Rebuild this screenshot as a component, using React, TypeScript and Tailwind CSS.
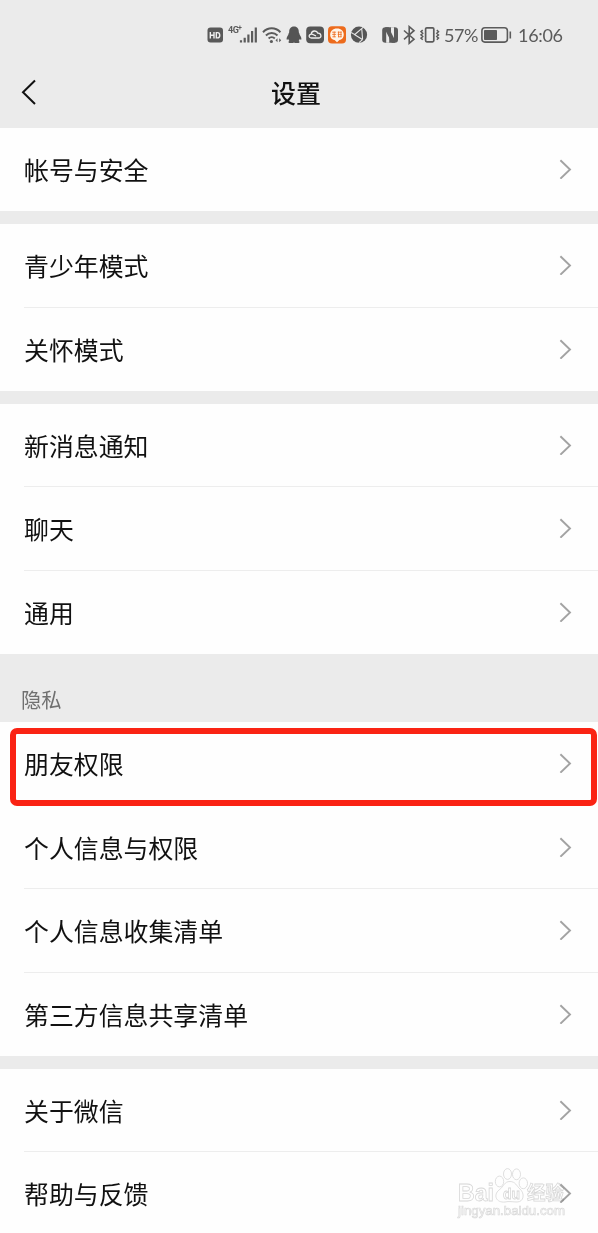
import type { ReactNode } from "react";
import clsx from "clsx";

type SettingGroup = {
  title?: string;
  className: string;
  items: string[];
};

const GROUPS: SettingGroup[] = [
  { className: "h-[83px]", items: ["帐号与安全"] },
  { className: "mt-[13px] h-[167px]", items: ["青少年模式", "关怀模式"] },
  { className: "mt-[13px] h-[250px]", items: ["新消息通知", "聊天", "通用"] },
  {
    title: "隐私",
    className: "h-[334px]",
    items: ["朋友权限", "个人信息与权限", "个人信息收集清单", "第三方信息共享清单"],
  },
  { className: "mt-[13px] h-[166px]", items: ["关于微信", "帮助与反馈"] },
];

const HIGHLIGHTED = "朋友权限";

function Glyph({ width, className, children }: { width: number; className?: string; children: ReactNode }) {
  return (
    <svg
      width={width}
      height={20}
      viewBox={`0 0 ${width} 20`}
      fill="none"
      stroke="none"
      aria-hidden="true"
      className={clsx("shrink-0", className)}
    >
      {children}
    </svg>
  );
}

function StatusBar() {
  return (
    <div className="flex h-[70px] items-center pl-[207px] text-[#5b5b5b]">
      <Glyph width={16}>
        <rect x="0.5" y="2.5" width="15.5" height="15" rx="3" fill="#595959" />
        <path d="M3.3 7v6.5M7 7v6.5M3.3 10.2H7M9.3 7.6v5.3h1.2c3 0 3-5.3 0-5.3z" stroke="#eee" strokeWidth="1.4" />
      </Glyph>
      {/* 4G+ と電波強度 */}
      <div className="relative ml-[5px] h-5 w-[30px] shrink-0">
        <span className="absolute top-[1px] left-0 font-['Roboto',sans-serif] text-[9px] leading-[9px] font-bold tracking-[-0.5px]">
          4G
        </span>
        <span className="absolute -top-[1px] left-[10px] font-['Roboto',sans-serif] text-[7px] leading-[9px] font-bold">
          +
        </span>
        <svg width="30" height="20" viewBox="0 0 30 20" className="absolute inset-0" aria-hidden="true">
          <path
            d="M13 15.2v2.3M16.7 12.7v4.8M20.4 9.5v8M24.1 6v11.5M27.8 2.5v15"
            stroke="#5b5b5b"
            strokeWidth="2.2"
          />
        </svg>
      </div>
      <Glyph width={20} className="ml-[4px]">
        <path d="M1 7.2c5-5.2 12.4-5.2 17.4 0" stroke="#5b5b5b" strokeWidth="2" />
        <path d="M3.9 10.5c3.4-3.4 8.2-3.4 11.6 0M6.6 13.5c1.8-1.8 4.4-1.8 6.2 0" stroke="#5b5b5b" strokeWidth="1.9" />
        <circle cx="9.4" cy="16.5" r="1.6" fill="#5b5b5b" />
        <path d="m15.5 13.3-2 2 2 2zM17.2 13.3l2 2-2 2z" fill="#5b5b5b" />
      </Glyph>
      <Glyph width={16} className="ml-[4px]">
        <path
          d="M8 1.5c-3.4 0-5 2.5-4.8 5.5 0 1.1-.9 1.6-.9 2.7C1.2 11.2.3 13 .7 14.4c.3.8 1 .2 1.5-.6.2 1 .6 1.6 1.2 2.2-.8.3-1.1.8-.8 1.4.5.9 4.6.8 5.4.1.8.7 4.9.8 5.4-.1.3-.6 0-1.1-.8-1.4.6-.6 1-1.2 1.2-2.2.5.8 1.2 1.4 1.5.6.4-1.4-.5-3.2-1.6-4.7 0-1.1-.9-1.6-.9-2.7C13 4 11.4 1.5 8 1.5z"
          fill="#555"
        />
      </Glyph>
      <Glyph width={18} className="ml-[4px]">
        <rect x="0.2" y="1.5" width="17.8" height="16.8" rx="4" fill="#555" />
        <path
          d="M13 13H5.4c-3 0-3-4 .2-3.9 1.8 0 2.9 1.7 4.5 1.7M5.2 9c.6-3.7 5.6-4 6.6-.8 3.9-.2 4 4.8 1.2 4.8"
          stroke="#eee"
          strokeWidth="1.3"
        />
      </Glyph>
      <Glyph width={18} className="ml-[4px]">
        <rect x="0" y="1.2" width="18" height="17.4" rx="4" fill="#ed6b1c" />
        <path d="M9 3.6c-8.6 0-8.6 10.9-2.4 11.4L9 17.2l2.4-2.2c6.2-.5 6.2-11.4-2.4-11.4z" fill="#fff5e9" />
        <path
          d="M4.2 7.2h3.9M4.2 9.4h3.9M4.4 11.8h3.5M6.2 6.5v5.7M9.7 7.2h4M9.7 9.4h4M10 11.8h3.5M10.5 6.5v5.7M13 6.5v5.7"
          stroke="#ed6b1c"
          strokeWidth="0.8"
        />
      </Glyph>
      <Glyph width={18} className="ml-[4px]">
        <circle cx="9" cy="9.7" r="8.1" fill="#555" />
        <path
          d="M13.4 2.2 4.8 9.5M4 9.2l8.8 5.6M12.6 14.6 11.8 4.2M4.4 9.4 1.2 7.5M12.5 14.7 9 17.7"
          stroke="#e6e6e6"
          strokeWidth="1.1"
        />
      </Glyph>
      <Glyph width={17} className="ml-[14px]">
        <rect x="0.2" y="2.3" width="15.8" height="15.4" rx="3.2" fill="#5b5b5b" />
        <path d="M4.2 17.7V5l3 2.6v10.1zM9 2.3v10.2l3 2.6V2.3z" fill="#ebebeb" />
        <path d="M3.4 2.3h3.2l6.2 12.5v2.9h-3L3.4 5.4z" fill="#5b5b5b" />
      </Glyph>
      <Glyph width={13} className="ml-[4px]">
        <path d="m1 5.5 10 8.7-4.8 4.1V1.6L11 5.7 1 14.3" stroke="#5b5b5b" strokeWidth="1.6" />
      </Glyph>
      <Glyph width={20} className="ml-[4px]">
        <rect x="5.6" y="2.8" width="8.2" height="14" rx="1.2" stroke="#5b5b5b" strokeWidth="1.7" />
        <path
          d="m2.7 5.1-1.7 1.6 1.7 1.6L1 9.9l1.7 1.6L1 13.1l1.7 1.6M16.8 5.1l1.7 1.6-1.7 1.6 1.7 1.6-1.7 1.6 1.7 1.6-1.7 1.6"
          stroke="#5b5b5b"
          strokeWidth="1.5"
        />
      </Glyph>
      <span className="ml-[4px] w-[33px] font-['Lato',sans-serif] text-[18px] leading-5 tracking-[-0.5px] whitespace-nowrap">
        57%
      </span>
      <Glyph width={32} className="ml-[4px]">
        <rect x="0.9" y="2.8" width="25.5" height="14.3" rx="3" stroke="#5b5b5b" strokeWidth="1.6" />
        <rect x="3" y="5" width="13" height="10" rx="0.8" fill="#5b5b5b" />
        <path d="M29.3 6.5v7" stroke="#5b5b5b" strokeWidth="1.6" />
      </Glyph>
      <span className="ml-[5px] font-['Lato',sans-serif] text-[18px] leading-5 tracking-[-0.3px] whitespace-nowrap">
        16:06
      </span>
    </div>
  );
}

function Watermark() {
  return (
    <svg
      width="112"
      height="54"
      viewBox="0 0 112 54"
      aria-hidden="true"
      className="pointer-events-none absolute top-[1167px] left-[457px] font-['Liberation_Sans','Noto_Sans_CJK_SC',sans-serif] mix-blend-multiply"
      fill="#fff"
      stroke="#d8d8d8"
      strokeWidth="0.8"
    >
      <text x="1" y="34" fontSize="24.5" fontWeight="700" textLength="36" lengthAdjust="spacingAndGlyphs">
        Bai
      </text>
      <ellipse cx="42.5" cy="14.5" rx="4.2" ry="5.4" />
      <ellipse cx="50.5" cy="7" rx="4" ry="5.4" />
      <ellipse cx="59.5" cy="7.3" rx="4" ry="5.4" />
      <ellipse cx="66.3" cy="16.3" rx="4.2" ry="5.4" />
      <path d="M53 14.5c5.5 0 6.5 4.5 10 7.5 5 4.5 4 13-3 13-4 0-8-1-12 0-9 1-12-7-6-12 5.5-4 5-8.5 11-8.5z" />
      <text x="46" y="32" fontSize="15" fontWeight="700" textLength="17" lengthAdjust="spacingAndGlyphs">
        du
      </text>
      <text x="70" y="33" fontSize="19" fontWeight="700" textLength="37" lengthAdjust="spacingAndGlyphs">
        经验
      </text>
      <text x="1" y="48" fontSize="12.5" strokeWidth="0.6" textLength="107" lengthAdjust="spacingAndGlyphs">
        jingyan.baidu.com
      </text>
    </svg>
  );
}

function SettingRow({ label, divided }: { label: string; divided: boolean }) {
  const highlighted = label === HIGHLIGHTED;

  return (
    <li className="relative flex flex-1 pl-6">
      <button
        type="button"
        className={clsx(
          "flex flex-1 items-center justify-between border-b pr-[26px] text-left",
          divided ? "border-[#ededed]" : "border-transparent",
        )}
      >
        <span className="text-[24.9px] leading-9 text-[#111]">{label}</span>
        <svg width="13" height="20" viewBox="0 0 13 20" fill="none" aria-hidden="true">
          <path d="m1.4 1.3 9.6 9.2-9.6 9.2" stroke="#a3a3a3" strokeWidth="1.9" />
        </svg>
      </button>
      {highlighted && (
        <span className="pointer-events-none absolute top-[6px] left-[10px] h-[78px] w-[587px] rounded-[7px] border-[6px] border-[#fa2314]" />
      )}
    </li>
  );
}

export default function App() {
  return (
    <main className="relative h-[1233px] w-[598px] overflow-hidden bg-[#ebebeb] font-['Noto_Sans_CJK_SC',sans-serif]">
      <header className="h-[128px]">
        <StatusBar />
        <div className="flex h-[44px] items-center">
          <button type="button" aria-label="返回" className="ml-[21px]">
            <svg width="16" height="26" viewBox="0 0 16 26" fill="none" aria-hidden="true">
              <path d="M14 1.5 2 13.2 14 25" stroke="#111" strokeWidth="2" />
            </svg>
          </button>
          <h1 className="ml-[234px] text-[25px] leading-[44px] font-medium text-[#111]">设置</h1>
        </div>
      </header>

      {GROUPS.map((group) => (
        <section key={group.items[0]}>
          {group.title && (
            <h2 className="h-[68px] pt-[30px] pl-[21px] text-[20.3px] leading-[30px] text-[#707070]">
              {group.title}
            </h2>
          )}
          <ul className={clsx("flex flex-col bg-[#fefefe]", group.className)}>
            {group.items.map((label, index) => (
              <SettingRow
                key={label}
                label={label}
                divided={index < group.items.length - 1 && label !== HIGHLIGHTED}
              />
            ))}
          </ul>
        </section>
      ))}

      <Watermark />
    </main>
  );
}
